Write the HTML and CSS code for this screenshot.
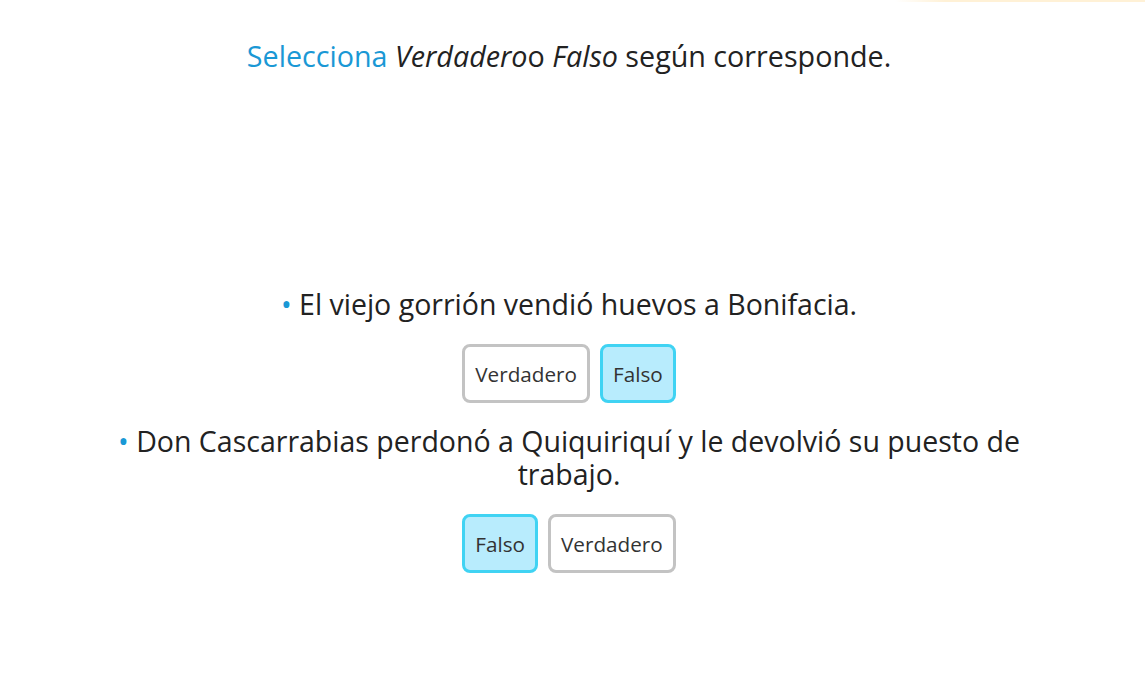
FILE: index.html
```html
<!DOCTYPE html>
<html lang="es">
<head>
<meta charset="utf-8">
<link rel="stylesheet" href="styles.css">
</head>
<body>
<div class="topline"></div>
<main class="page">
  <h1 class="title"><span class="accent">Selecciona</span> <em>Verdadero</em>o <em>Falso</em> según corresponde.</h1>
  <section class="questions">
    <div class="item">
      <p class="statement"><span class="bullet">•</span> El viejo gorrión vendió huevos a Bonifacia.</p>
      <div class="options">
        <button class="opt">Verdadero</button>
        <button class="opt selected">Falso</button>
      </div>
    </div>
    <div class="item">
      <p class="statement"><span class="bullet">•</span> Don Cascarrabias perdonó a Quiquiriquí y le devolvió su puesto de trabajo.</p>
      <div class="options">
        <button class="opt selected">Falso</button>
        <button class="opt">Verdadero</button>
      </div>
    </div>
  </section>
</main>
</body>
</html>
```
FILE: styles.css
```css
* { box-sizing: border-box; }
html, body { margin: 0; padding: 0; background: #fff; }
body {
  font-family: "Open Sans", "Noto Sans", sans-serif;
  color: #222;
  width: 1145px;
  height: 689px;
  overflow: hidden;
  position: relative;
}
.topline {
  position: absolute;
  top: 0;
  right: 0;
  width: 250px;
  height: 2px;
  background: linear-gradient(to right, rgba(255,236,200,0), #fff1d6 20%, #fff1d6);
}
.page {
  display: flex;
  flex-direction: column;
  align-items: center;
  padding-top: 36px;
  padding-right: 7px;
}
.title {
  margin: 0;
  font-weight: 400;
  font-size: 28.7px;
  line-height: 40px;
  text-align: center;
}
.accent { color: #1a98d5; }
.questions {
  margin-top: 212px;
  width: 940px;
  display: flex;
  flex-direction: column;
  gap: 22px;
}
.item {
  display: flex;
  flex-direction: column;
  align-items: center;
}
.statement {
  margin: 0;
  font-size: 28.5px;
  line-height: 33px;
  text-align: center;
}
.bullet { color: #1a98d5; }
.options {
  display: flex;
  gap: 10px;
  margin-top: 23px;
}
.opt {
  font-family: inherit;
  font-size: 20.7px;
  color: #333;
  background: #fff;
  border: 3px solid #c3c3c3;
  border-radius: 8px;
  height: 59px;
  padding: 0 10px;
  cursor: pointer;
}
.opt.selected {
  background: #b8ecfd;
  border-color: #40d3f3;
}
```
